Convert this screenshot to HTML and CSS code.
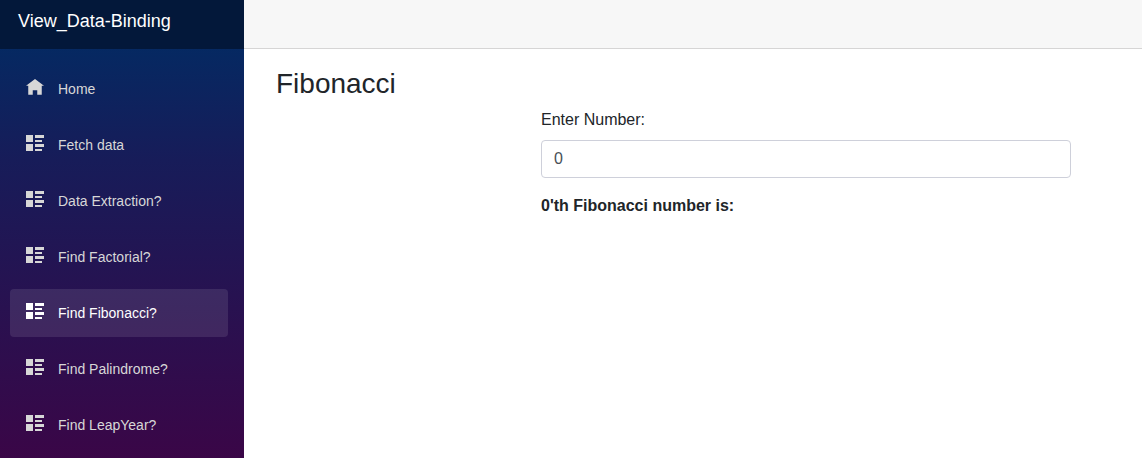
FILE: index.html
```html
<!DOCTYPE html>
<html lang="en">
<head>
  <meta charset="utf-8">
  <meta name="viewport" content="width=device-width, initial-scale=1">
  <title>View_Data-Binding</title>
  <link rel="stylesheet" href="styles.css">
</head>
<body>
  <svg class="symbols" aria-hidden="true">
    <symbol id="home" viewBox="0 0 8 8"><path d="M4 0l-4 3h1v4h2v-2h2v2h2v-4h1z"/></symbol>
    <symbol id="list" viewBox="0 0 18 18"><path d="M0 0h7v7H0zM0 9h7v7H0zM9 0h9v3H9zM9 5h7v2H9zM9 9h9v3H9zM9 14h7v2H9z"/></symbol>
  </svg>
  <div class="app">
    <div class="sidebar">
      <header class="brand-bar"><a class="brand" href="#">View_Data-Binding</a></header>
      <nav class="nav">
        <a class="nav-link" href="#"><svg class="icon" aria-hidden="true"><use href="#home"/></svg>Home</a>
        <a class="nav-link" href="#"><svg class="icon" aria-hidden="true"><use href="#list"/></svg>Fetch data</a>
        <a class="nav-link" href="#"><svg class="icon" aria-hidden="true"><use href="#list"/></svg>Data Extraction?</a>
        <a class="nav-link" href="#"><svg class="icon" aria-hidden="true"><use href="#list"/></svg>Find Factorial?</a>
        <a class="nav-link active" href="#" aria-current="page"><svg class="icon" aria-hidden="true"><use href="#list"/></svg>Find Fibonacci?</a>
        <a class="nav-link" href="#"><svg class="icon" aria-hidden="true"><use href="#list"/></svg>Find Palindrome?</a>
        <a class="nav-link" href="#"><svg class="icon" aria-hidden="true"><use href="#list"/></svg>Find LeapYear?</a>
      </nav>
    </div>
    <div class="main">
      <div class="top-row"></div>
      <main class="content">
        <h3 class="title">Fibonacci</h3>
        <div class="form-row">
          <div class="field">
            <label class="label" for="number">Enter Number:</label>
            <input class="input" id="number" type="text" value="0">
            <strong class="result">0'th Fibonacci number is:</strong>
          </div>
        </div>
      </main>
    </div>
  </div>
</body>
</html>
```
FILE: styles.css
```css
*, *::before, *::after {
  box-sizing: border-box;
}

body {
  margin: 0;
  font-family: "Liberation Sans", Arial, sans-serif;
  font-size: 16px;
  line-height: 24px;
  color: #212529;
  background: #fff;
}

.symbols {
  display: none;
}

.app {
  display: flex;
  min-height: 100vh;
}

.sidebar {
  flex: 0 0 244px;
  background: linear-gradient(180deg, #052962 10%, #171c59 35%, #3a0647 100%);
}

.brand-bar {
  display: flex;
  align-items: flex-start;
  height: 49px;
  padding: 9px 18px;
  background: rgba(0, 0, 0, 0.4);
}

.brand {
  font-size: 18px;
  color: #fff;
  text-decoration: none;
}

.nav {
  display: flex;
  flex-direction: column;
  gap: 8px;
  padding: 16px 16px 8px 10px;
}

.nav-link {
  display: flex;
  align-items: center;
  gap: 14px;
  height: 48px;
  padding: 0 16px;
  border-radius: 4px;
  font-size: 14px;
  color: #d7d7d7;
  text-decoration: none;
}

.nav-link.active {
  background: rgba(255, 255, 255, 0.1);
  color: #fff;
}

.icon {
  width: 18px;
  height: 18px;
  margin-bottom: 2px;
  fill: currentColor;
}

.main {
  flex: 1;
  min-width: 0;
}

.top-row {
  height: 49px;
  background: #f7f7f7;
  border-bottom: 1px solid #d6d5d5;
}

.content {
  padding: 19px 71px 0 32px;
}

.title {
  margin: 0 0 8px;
  font-size: 28px;
  font-weight: 400;
  line-height: 32px;
}

.form-row {
  display: grid;
  grid-template-columns: 1fr 2fr;
}

.field {
  grid-column: 2;
  display: flex;
  flex-direction: column;
}

.label {
  margin-bottom: 8px;
}

.input {
  width: 100%;
  height: 38px;
  margin-bottom: 16px;
  padding: 6px 12px;
  border: 1px solid #ced0da;
  border-radius: 4px;
  font: inherit;
  color: #495057;
  background: #fff;
}
```
